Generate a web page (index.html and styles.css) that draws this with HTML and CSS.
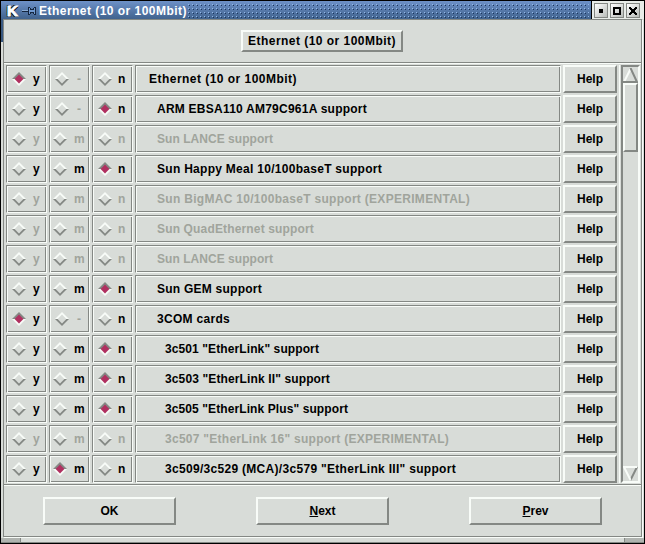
FILE: index.html
```html
<!DOCTYPE html>
<html lang="en">
<head>
<meta charset="utf-8">
<title>Ethernet (10 or 100Mbit)</title>
<link rel="stylesheet" href="styles.css">
</head>
<body>
<div class="window">
  <header class="titlebar">
    <span class="logo">K</span>
    <svg class="pin" width="14" height="10" shape-rendering="crispEdges"><path d="M0 4h6v2H0z" fill="#15263f"/><path d="M0 4h6v1H0z" fill="#8badd8"/><path d="M6 1h2v1h1v1h2V2h1V1h2v8h-2V8h-1V7H9v1H8v1H6z" fill="#15263f"/><path d="M7 2h1v2h4V2h1v6h-1V6H8v2H7z" fill="#6f98cf"/></svg>
    <span class="caption" data-width="148">Ethernet (10 or 100Mbit)</span>
    <svg class="grip" height="17" shape-rendering="crispEdges"><defs><pattern id="dots" width="4" height="4" patternUnits="userSpaceOnUse"><path d="M0 0h1v1H0z" fill="#94b8e8"/><path d="M1 1h1v1H1z" fill="#1c365c"/></pattern></defs><rect width="100%" height="15" fill="url(#dots)"/></svg>
    <div class="controls">
      <button><svg width="8" height="8"><path d="M2 2h4v4H2z"/></svg></button>
      <button><svg width="8" height="8"><path d="M0 0h8v8H0zM2 2v4h4V2z" fill-rule="evenodd"/></svg></button>
      <button><svg width="8" height="8" shape-rendering="crispEdges"><path d="M0 0h2v1h1v1h2V1h1V0h2v2H7v1H6v2h1v1h1v2H6V7H5V6H3v1H2v1H0V6h1V5h1V3H1V2H0z"/></svg></button>
    </div>
  </header>
  <main class="panel">
    <div class="heading"><div class="banner"><span data-width="148">Ethernet (10 or 100Mbit)</span></div></div>
    <div class="body">
      <div class="rows" id="rows"></div>
      <div class="scrollbar">
        <svg width="15" height="15"><path d="M7.5 1L1 14" stroke="#f8fcf8" stroke-width="2"/><path d="M7.5 0L14 14H0" fill="none" stroke="#848884" stroke-width="2"/></svg>
        <div class="thumb"></div>
        <svg class="down" width="15" height="15"><path d="M14 1L7.5 14" stroke="#848884" stroke-width="2"/><path d="M14 1H1L7.5 14" fill="none" stroke="#f8fcf8" stroke-width="2"/></svg>
      </div>
    </div>
    <footer class="actions">
      <button class="action">OK</button>
      <button class="action"><u>N</u>ext</button>
      <button class="action"><u>P</u>rev</button>
    </footer>
  </main>
  <div class="resize"><i></i><b></b><i></i></div>
</div>
<script src="rows.js"></script>
</body>
</html>
```
FILE: styles.css
```css
* { box-sizing: border-box; }
body { margin: 0; background: #000; font: bold 12px/14px "Liberation Sans", Arial, sans-serif; color: #000; }
button { font: inherit; color: inherit; padding: 0; border-radius: 0; margin: 0; }
svg { display: block; flex: none; }
span { white-space: pre; }
.window { width: 645px; height: 544px; border: 1px solid #000; background: linear-gradient(#41638e, #35547c) 0 0 / 2px 41px no-repeat #d8dcd8; display: flex; flex-direction: column; overflow: hidden; }
.titlebar { height: 18px; flex: none; display: flex; align-items: center; padding: 1px 0 0 6px; color: #fff; background: linear-gradient(#6d91c8, #41638e); }
.logo { width: 15px; font-size: 15px; line-height: 16px; -webkit-text-stroke: 1px #fff; text-shadow: 1px 1px 0 #000, -1px 1px 0 #000, -1px -1px 0 #000; }
.pin { margin-right: 3px; }
.caption { width: 148px; flex: none; }
.grip { flex: 1; width: 0; margin: 3px 2px 0 1px; }
.controls { display: flex; gap: 2px; height: 18px; margin-top: -1px; padding: 2px 4px 1px 2px; background: #e8ece8; border-left: 1px solid #000; }
.controls button { width: 14px; height: 15px; border: 1px solid #848884; background: linear-gradient(135deg, #fff, #b8bcb8); display: grid; place-items: center; }
.panel { height: 518px; flex: none; margin: 0 2px 0 2px; border: 1px solid #848884; box-shadow: 1px 1px #f8fcf8; }
.heading { height: 44px; padding: 10px 1px 0 0; border-bottom: 1px solid #f8fcf8; box-shadow: inset 0 -1px #848884; display: flex; justify-content: center; align-items: flex-start; }
.banner { width: 162px; height: 22px; padding: 2px 5px; }
.banner, .help, .action, .thumb { background: #d8dcd8; border: 2px solid; border-color: #f8fcf8 #848884 #848884 #f8fcf8; }
.body { height: 421px; display: flex; padding: 1px 0 2px 2px; }
.rows { width: 614px; border-right: 1px solid #f8fcf8; display: flex; flex-direction: column; gap: 2px; }
.row { height: 28px; display: grid; grid-template-columns: 41px 41px 41px 426px 54px; gap: 2px; flex: none; }
.cell { border: 1px solid; border-color: #848884 #f8fcf8 #f8fcf8 #848884; box-shadow: inset 1px 1px #f8fcf8, inset -1px -1px #848884; display: flex; align-items: center; }
.choice { padding-left: 5px; gap: 7px; }
.choice.m { padding-left: 3px; }
.choice.n { gap: 6px; }
.choice.dash { gap: 8px; }
.off { color: #a0a49c; }
.level0 { padding-left: 13px; }
.level1 { padding-left: 21px; }
.level2 { padding-left: 29px; }
.scrollbar { width: 19px; margin-left: 1px; border: 2px solid; border-color: #848884 #f8fcf8 #f8fcf8 #848884; display: flex; flex-direction: column; }
.scrollbar svg { margin-top: 1px; }
.scrollbar .down { margin-top: auto; }
.thumb { height: 69px; width: 15px; }
.actions { height: 51px; border-top: 1px solid #f8fcf8; box-shadow: 0 -1px #848884; padding: 11px 39px 0; display: flex; justify-content: space-between; align-items: flex-start; }
.action { width: 133px; height: 28px; }
.resize { flex: 1; display: flex; margin-top: 1px; border-bottom: 1px solid #848884; }
.resize i { width: 19px; background: #b0b4b0; }
.resize b { flex: 1; border: solid #848884; border-width: 0 1px; }
```
FILE: rows.js
```js
// [label, indent level, y/m/n selection, middle column symbol, disabled symbols, text width]
const options = [
  ['Ethernet (10 or 100Mbit)', 0, 'y', '-', '-', 148],
  ['ARM EBSA110 AM79C961A support', 1, 'n', '-', '-', 210],
  ['Sun LANCE support', 1, '', 'm', 'ymn', 116],
  ['Sun Happy Meal 10/100baseT support', 1, 'n', 'm', '', 225],
  ['Sun BigMAC 10/100baseT support (EXPERIMENTAL)', 1, '', 'm', 'ymn', 313],
  ['Sun QuadEthernet support', 1, '', 'm', 'ymn', 157],
  ['Sun LANCE support', 1, '', 'm', 'ymn', 116],
  ['Sun GEM support', 1, 'n', 'm', '', 105],
  ['3COM cards', 1, 'y', '-', '-', 73],
  ['3c501 "EtherLink" support', 2, 'n', 'm', '', 154],
  ['3c503 "EtherLink II" support', 2, 'n', 'm', '', 165],
  ['3c505 "EtherLink Plus" support', 2, 'n', 'm', '', 183],
  ['3c507 "EtherLink 16" support (EXPERIMENTAL)', 2, '', 'm', 'ymn', 284],
  ['3c509/3c529 (MCA)/3c579 "EtherLink III" support', 2, 'm', 'm', '', 291]
];

function diamond(selected) {
  const top = selected ? '#848884' : '#f8fcf8';
  const bottom = selected ? '#f8fcf8' : '#848884';
  const fill = selected ? '#b03060' : '#d8dcd8';
  return `<svg width="14" height="14"><path d="M0 7L7 0l7 7z" fill="${top}"/><path d="M0 7h14l-7 7z" fill="${bottom}"/><path d="M2.6 7L7 2.6 11.4 7 7 11.4z" fill="${fill}"/></svg>`;
}

document.getElementById('rows').innerHTML = options.map(([label, level, selected, middle, off, width]) => {
  const choices = ['y', middle, 'n'].map(symbol =>
    `<div class="cell choice ${symbol === '-' ? 'dash' : symbol} ${off.includes(symbol) ? 'off' : ''}">${diamond(symbol === selected)}<span>${symbol}</span></div>`
  ).join('');
  return `<div class="row">${choices}<div class="cell level${level} ${off === 'ymn' ? 'off' : ''}"><span data-width="${width}">${label}</span></div><button class="help"><span data-width="26">Help</span></button></div>`;
}).join('');

// Spread the letters so that each label takes its own width.
document.querySelectorAll('[data-width]').forEach(el => {
  const range = document.createRange();
  range.selectNodeContents(el);
  const natural = range.getBoundingClientRect().width;
  el.style.letterSpacing = (el.dataset.width - natural) / el.textContent.length + 'px';
});
```
